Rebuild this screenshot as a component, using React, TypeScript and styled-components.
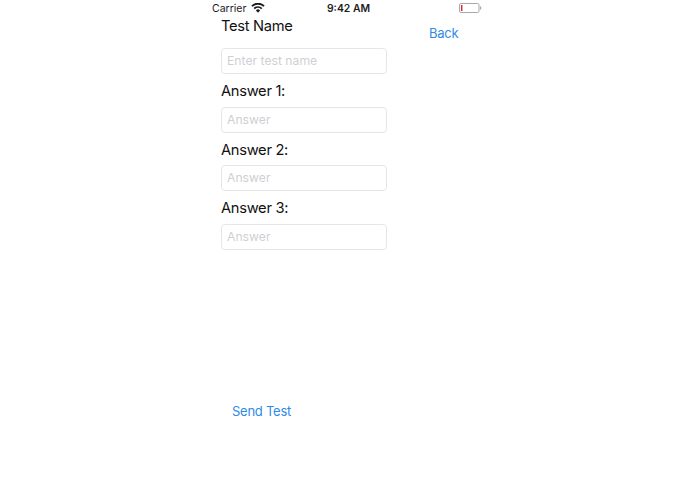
import React from "react"
import styled, { createGlobalStyle } from "styled-components"

const GlobalStyle = createGlobalStyle`
  html, body {
    margin: 0;
    padding: 0;
    background: #fff;
  }
  body {
    font-family: Inter, "Liberation Sans", sans-serif;
    -webkit-font-smoothing: antialiased;
  }
`

const Page = styled.div`
  width: 695px;
  height: 494px;
  overflow: hidden;
  display: flex;
  justify-content: flex-start;
  padding-left: 208px;
  box-sizing: border-box;
`

const Phone = styled.div`
  width: 276px;
  height: 494px;
  display: flex;
  flex-direction: column;
`

const StatusBar = styled.div`
  height: 16px;
  display: grid;
  grid-template-columns: 1fr auto 1fr;
  align-items: center;
  padding: 0 2px 0 4px;
  color: #1c1c1e;
  font-size: 10.5px;
`

const Carrier = styled.div`
  display: flex;
  align-items: center;
  gap: 5px;
`

const Clock = styled.div`
  font-weight: 600;
  font-size: 10.4px;
  margin-left: 3px;
`

const BatteryWrap = styled.div`
  display: flex;
  justify-content: flex-end;
`

const Body = styled.div`
  display: flex;
  flex: 1;
`

const Form = styled.div`
  width: 179px;
  padding-left: 13px;
  box-sizing: border-box;
  display: flex;
  flex-direction: column;
`

const Label = styled.div<{ $first?: boolean }>`
  height: 20px;
  line-height: 20px;
  font-size: 14.7px;
  letter-spacing: -0.3px;
  color: #111;
  margin-top: ${props => (props.$first ? "0" : "7px")};
  margin-bottom: ${props => (props.$first ? "12px" : "5.5px")};
`

const Field = styled.input`
  display: block;
  width: 166px;
  height: 26px;
  box-sizing: border-box;
  border: 1px solid #e6e6e8;
  border-radius: 4px;
  padding: 0 5px 1px;
  outline: none;
  background: #fff;
  font-family: inherit;
  font-size: 12.2px;
  &::placeholder {
    color: #cfcfd3;
    opacity: 1;
  }
`

const LinkButton = styled.button`
  border: none;
  background: none;
  padding: 0;
  font-family: inherit;
  font-size: 13px;
  letter-spacing: -0.25px;
  color: #2f8ae8;
`

const SendButton = styled(LinkButton)`
  align-self: flex-start;
  margin: 151.5px 0 0 11px;
  height: 20px;
`

const BackColumn = styled.div`
  padding: 6px 0 0 42px;
`

const WifiIcon = () => (
  <svg width="14" height="10" viewBox="0 0 14 10">
    <path d="M7 9.8 4.9 7.4a3 3 0 0 1 4.2 0z" fill="#1c1c1e" />
    <path d="M3.9 6.3 2.6 4.9a6.4 6.4 0 0 1 8.8 0l-1.3 1.4a4.5 4.5 0 0 0-6.2 0z" fill="#1c1c1e" />
    <path d="M1.6 3.8.3 2.4a9.8 9.8 0 0 1 13.4 0l-1.3 1.4a7.9 7.9 0 0 0-10.8 0z" fill="#1c1c1e" />
  </svg>
)

const BatteryIcon = () => (
  <svg width="23" height="10" viewBox="0 0 23 10">
    <rect x="0.5" y="0.5" width="19.5" height="9" rx="1.5" fill="#fff" stroke="#a8a8a8" />
    <rect x="2" y="2" width="1.4" height="6" fill="#e0202a" />
    <rect x="21" y="3.5" width="1.2" height="3" fill="#a8a8a8" />
  </svg>
)

const questions = ["Answer 1:", "Answer 2:", "Answer 3:"]

const App = () => {
  return (
    <Page>
      <GlobalStyle />
      <Phone>
        <StatusBar>
          <Carrier>
            Carrier
            <WifiIcon />
          </Carrier>
          <Clock>9:42 AM</Clock>
          <BatteryWrap>
            <BatteryIcon />
          </BatteryWrap>
        </StatusBar>
        <Body>
          <Form>
            <Label $first>Test Name</Label>
            <Field placeholder="Enter test name" />
            {questions.map(question => (
              <React.Fragment key={question}>
                <Label>{question}</Label>
                <Field placeholder="Answer" />
              </React.Fragment>
            ))}
            <SendButton>Send Test</SendButton>
          </Form>
          <BackColumn>
            <LinkButton>Back</LinkButton>
          </BackColumn>
        </Body>
      </Phone>
    </Page>
  )
}

export default App
